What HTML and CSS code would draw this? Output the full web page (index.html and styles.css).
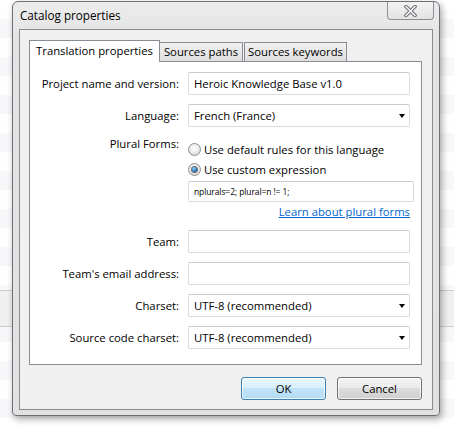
FILE: index.html
```html
<!DOCTYPE html>
<html lang="en">
<head>
<meta charset="utf-8">
<title>Catalog properties</title>
<link rel="stylesheet" href="styles.css">
</head>
<body>
<div class="dialog">
  <div class="titlebar">
    <span class="title">Catalog properties</span>
    <div class="close">
      <svg width="13" height="12" viewBox="0 0 13 12">
        <path d="M2 1.5 L11 10.5 M11 1.5 L2 10.5" stroke="#6a6d72" stroke-width="3.4" stroke-linecap="square" fill="none"/>
        <path d="M2 1.5 L11 10.5 M11 1.5 L2 10.5" stroke="#ffffff" stroke-width="1.4" stroke-linecap="square" fill="none"/>
      </svg>
    </div>
  </div>
  <div class="client">
    <div class="tabs">
      <div class="tab active tab-w1">Translation properties</div>
      <div class="tab tab-w2">Sources paths</div>
      <div class="tab tab-w3">Sources keywords</div>
    </div>
    <div class="page">
      <div class="form">
        <div class="label">Project name and version:</div>
        <div class="field">Heroic Knowledge Base v1.0</div>

        <div class="label">Language:</div>
        <div class="field select">French (France)<span class="caret"></span></div>

        <div class="label label-top">Plural Forms:</div>
        <div class="plural">
          <div class="radio-row"><span class="radio"></span>Use default rules for this language</div>
          <div class="radio-row"><span class="radio on"></span>Use custom expression</div>
          <div class="field expr">nplurals=2; plural=n != 1;</div>
          <div class="link-row"><span class="link">Learn about plural forms</span></div>
        </div>

        <div class="label">Team:</div>
        <div class="field"></div>

        <div class="label">Team's email address:</div>
        <div class="field"></div>

        <div class="label">Charset:</div>
        <div class="field select">UTF-8 (recommended)<span class="caret"></span></div>

        <div class="label">Source code charset:</div>
        <div class="field select">UTF-8 (recommended)<span class="caret"></span></div>
      </div>
    </div>
    <div class="buttons">
      <div class="btn btn-default">OK</div>
      <div class="btn">Cancel</div>
    </div>
  </div>
</div>
</body>
</html>
```
FILE: styles.css
```css
html, body {
  margin: 0;
  height: 100%;
}

body {
  box-sizing: border-box;
  padding: 1px 0 0 12px;
  font-family: "Open Sans", "Noto Sans", sans-serif;
  font-size: 11.3px;
  color: #000;
  background:
    linear-gradient(to bottom,
      transparent 290px, #cdcdcd 290px, #cdcdcd 291px,
      #f0f0f0 291px, #f0f0f0 326px,
      #cdcdcd 326px, #cdcdcd 327px, transparent 327px),
    repeating-linear-gradient(to bottom,
      #ffffff 0, #ffffff 19px, #f8f8fa 19px, #f8f8fa 38px);
}

.dialog {
  width: 428px;
  box-sizing: border-box;
  border: 1px solid #6d7177;
  border-radius: 6px 6px 4px 4px;
  background: linear-gradient(to bottom, #ececec 0, #e3e3e3 40px, #e1e1e1 100%);
  box-shadow: 2px 3px 7px rgba(0, 0, 0, 0.35);
}

.titlebar {
  height: 27px;
  display: flex;
  justify-content: space-between;
  align-items: flex-start;
  padding: 0 5px 0 7px;
}

.title {
  line-height: 26px;
  font-size: 11.7px;
}

.close {
  width: 47px;
  height: 18px;
  box-sizing: border-box;
  border: 1px solid #8c9096;
  border-top: none;
  border-radius: 0 0 4px 4px;
  background: linear-gradient(to bottom, #f4f4f4, #e2e2e2);
  display: flex;
  align-items: center;
  justify-content: center;
}

.client {
  margin: 0 6px 5px;
  border: 1px solid #8b8b8b;
  background: #f0f0f0;
  padding: 10px 10px 9px 9px;
}

.tabs {
  display: flex;
  align-items: flex-end;
  height: 21px;
  position: relative;
  z-index: 1;
}

.tab {
  flex: none;
  height: 19px;
  box-sizing: border-box;
  border: 1px solid #898c95;
  border-bottom: none;
  background: linear-gradient(to bottom, #f1f1f1, #dedede);
  text-align: center;
  line-height: 18px;
  white-space: nowrap;
}

.tab.active {
  height: 22px;
  margin-bottom: -1px;
  background: #fff;
  line-height: 19px;
}

.tab-w1 { width: 131px; }
.tab-w2 { width: 83px; border-left: none; }
.tab-w3 { width: 103px; margin-left: 1px; }

.page {
  border: 1px solid #898c95;
  background: #fff;
  padding: 10px 11px 15px 0;
}

.form {
  display: grid;
  grid-template-columns: 149px 1fr;
  column-gap: 9px;
  row-gap: 9px;
}

.label {
  text-align: right;
  align-self: center;
  white-space: nowrap;
}

.label-top {
  align-self: start;
  line-height: 16px;
}

.field {
  height: 23px;
  box-sizing: border-box;
  border: 1px solid #d9dadc;
  border-top-color: #c9cbcf;
  border-radius: 2px;
  padding: 0 4px 0 5px;
  display: flex;
  align-items: center;
  background: #fff;
  white-space: nowrap;
}

.caret {
  margin-left: auto;
  width: 0;
  height: 0;
  border-left: 3.5px solid transparent;
  border-right: 3.5px solid transparent;
  border-top: 4px solid #000;
}

.plural {
  height: 85px;
  box-sizing: border-box;
  padding-top: 3px;
}

.radio-row {
  height: 20px;
  display: flex;
  align-items: center;
  gap: 3px;
}

.radio {
  width: 13px;
  height: 13px;
  box-sizing: border-box;
  border-radius: 50%;
  border: 1px solid #8e8f8f;
  background: radial-gradient(circle at 50% 40%, #ffffff 0, #eeeeee 45%, #c9c9c9 100%);
  display: flex;
  align-items: center;
  justify-content: center;
}

.radio.on::after {
  content: "";
  width: 5px;
  height: 5px;
  border-radius: 50%;
  background: radial-gradient(circle at 40% 35%, #8fd3ff 0, #1b6fb8 60%, #0d3f78 100%);
  box-shadow: 0 0 0 1px #6b6b6b;
}

.expr {
  height: 21px;
  margin: 2px -4px 0 0;
  font-size: 8.5px;
  letter-spacing: -0.1px;
}

.link-row {
  height: 19px;
  display: flex;
  justify-content: flex-end;
  align-items: center;
}

.link {
  color: #0066cc;
  text-decoration: underline;
}

.buttons {
  display: flex;
  justify-content: flex-end;
  gap: 11px;
  margin-top: 12px;
}

.btn {
  width: 85px;
  height: 23px;
  box-sizing: border-box;
  border: 1px solid #707070;
  border-radius: 3px;
  background: linear-gradient(to bottom, #f2f2f2 0, #ebebeb 50%, #dddddd 50%, #cfcfcf 100%);
  box-shadow: inset 0 0 0 1px rgba(255, 255, 255, 0.75);
  display: flex;
  align-items: center;
  justify-content: center;
}

.btn-default {
  border-color: #3c7fb1;
  background: linear-gradient(to bottom, #e8f5fd 0, #d7effc 50%, #c2e4f8 50%, #b3dbf3 100%);
}
```
